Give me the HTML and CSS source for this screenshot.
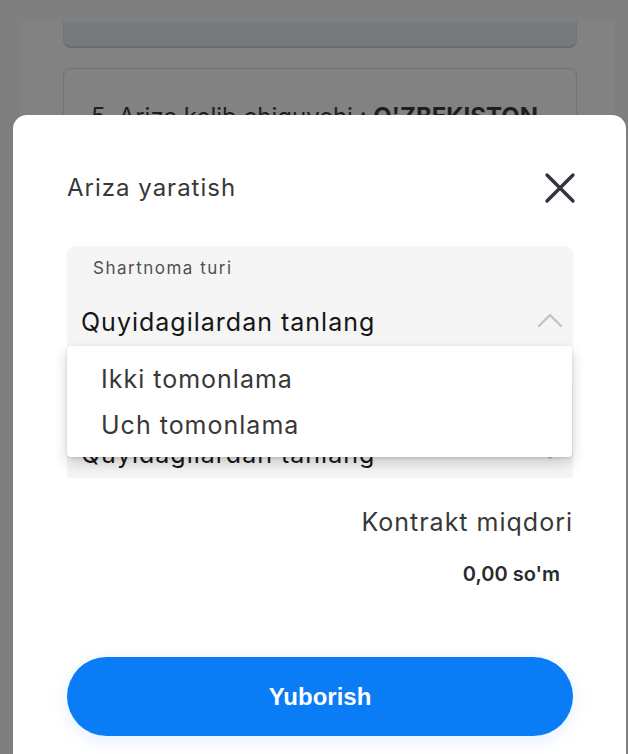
FILE: index.html
```html
<!DOCTYPE html>
<html lang="uz">
<head>
<meta charset="utf-8">
<title>Ariza yaratish</title>
<link rel="stylesheet" href="styles.css">
</head>
<body>
<div class="page">
  <div class="content">
    <div class="card card-top"></div>
    <div class="card card-main">
      <p class="card-text">5. Ariza kelib chiquvchi : <b>O'ZBEKISTON</b></p>
    </div>
  </div>
</div>

<div class="modal">
  <div class="modal-head">
    <h2 class="modal-title">Ariza yaratish</h2>
    <button class="close" type="button" aria-label="Yopish">
      <svg width="32" height="32" viewBox="0 0 32 32"><path d="M3 3 L29 29 M29 3 L3 29" stroke="#33333f" stroke-width="3.4" stroke-linecap="round" fill="none"/></svg>
    </button>
  </div>

  <div class="field">
    <div class="select">
      <div class="select-label">Shartnoma turi</div>
      <div class="select-row">
        <span class="select-value">Quyidagilardan tanlang</span>
        <svg class="chev" width="26" height="16" viewBox="0 0 26 16"><path d="M2 14 L13 3 L24 14" stroke="#c4c4c4" stroke-width="2.4" fill="none" stroke-linecap="round" stroke-linejoin="round"/></svg>
      </div>
    </div>
    <ul class="menu">
      <li class="menu-item">Ikki tomonlama</li>
      <li class="menu-item">Uch tomonlama</li>
    </ul>
  </div>

  <div class="field">
    <div class="select">
      <div class="select-label">Shartnoma turi</div>
      <div class="select-row">
        <span class="select-value">Quyidagilardan tanlang</span>
        <svg class="chev" width="26" height="16" viewBox="0 0 26 16"><path d="M2 3 L13 14 L24 3" stroke="#c4c4c4" stroke-width="2.4" fill="none" stroke-linecap="round" stroke-linejoin="round"/></svg>
      </div>
    </div>
  </div>

  <div class="sum-label">Kontrakt miqdori</div>
  <div class="sum-value">0,00 so'm</div>

  <button class="submit" type="button">Yuborish</button>
</div>
</body>
</html>
```

FILE: styles.css
```css
* { box-sizing: border-box; }
html, body { margin: 0; padding: 0; }
body {
  width: 628px;
  height: 754px;
  overflow: hidden;
  background: #7f7f7f;
  font-family: Inter, "Noto Sans", sans-serif;
}
.page {
  padding-top: 22px;
  height: 754px;
}
.content {
  margin: 0 12px 0 18px;
  height: 100%;
  background: #828282;
  border-left: 1px solid #7c7c7c;
  border-right: 1px solid #7c7c7c;
  padding: 0 38px 0 44px;
}
.card {
  border: 1px solid #737373;
}
.card-top {
  height: 26px;
  background: #767a7c;
  border-top: none;
  border-radius: 0 0 8px 8px;
  border-bottom: 2px solid #6b6b6b;
}
.card-main {
  margin-top: 20px;
  height: 300px;
  border-radius: 8px;
  background: #828282;
  padding: 32px 27px;
}
.card-text {
  margin: 0;
  font-size: 24px;
  line-height: 32px;
  color: #1f1f1f;
  white-space: nowrap;
}

.modal {
  position: fixed;
  left: 13px;
  top: 115px;
  right: 2px;
  bottom: 0;
  background: #ffffff;
  border-radius: 14px 14px 0 0;
  padding: 56px 53px 0 54px;
}
.modal-head {
  display: flex;
  justify-content: space-between;
  align-items: center;
  height: 32px;
  margin-top: 1px;
}
.modal-title {
  margin: 0;
  font-size: 24px;
  line-height: 32px;
  font-weight: 400;
  letter-spacing: 1px;
  color: #383838;
}
.close {
  border: 0;
  background: none;
  padding: 0;
  margin-right: -3px;
  width: 32px;
  height: 32px;
  display: flex;
}

.field {
  position: relative;
  margin-top: 42px;
}
.field + .field { margin-top: 32px; }
.select {
  height: 100px;
  background: #f5f5f5;
  border-radius: 8px 8px 0 0;
  padding: 11px 10px 0 14px;
}
.select-label {
  padding-left: 12px;
  font-size: 17px;
  line-height: 22px;
  letter-spacing: 1.5px;
  color: #505050;
}
.select-row {
  margin-top: 27px;
  display: flex;
  justify-content: space-between;
  align-items: center;
  height: 32px;
}
.select-value {
  font-size: 25px;
  line-height: 32px;
  letter-spacing: 1px;
  color: #161616;
}
.chev { margin-top: -4px; }

.menu {
  position: absolute;
  left: 0;
  top: 100px;
  width: 505px;
  margin: 0;
  list-style: none;
  padding: 10px 0 9px;
  background: #ffffff;
  border-radius: 4px;
  box-shadow: 0 6px 14px rgba(0,0,0,0.18), 0 1px 3px rgba(0,0,0,0.12);
  z-index: 2;
}
.menu-item {
  padding: 0 34px;
  font-size: 25px;
  line-height: 46px;
  letter-spacing: 1px;
  color: #383838;
}

.sum-label {
  margin-top: 28px;
  text-align: right;
  font-size: 25px;
  line-height: 32px;
  letter-spacing: 1px;
  color: #383838;
}
.sum-value {
  margin-top: 22px;
  padding-right: 13px;
  text-align: right;
  font-size: 20px;
  line-height: 28px;
  font-weight: 600;
  color: #2a2a2a;
}
.submit {
  display: block;
  width: 100%;
  margin-top: 69px;
  height: 79px;
  border: 0;
  border-radius: 40px;
  background: #0a7cf6;
  color: #ffffff;
  font-family: "Liberation Sans", Arial, sans-serif;
  font-weight: 700;
  font-size: 24px;
  box-shadow: 0 4px 18px rgba(10,124,246,0.12);
}
```
